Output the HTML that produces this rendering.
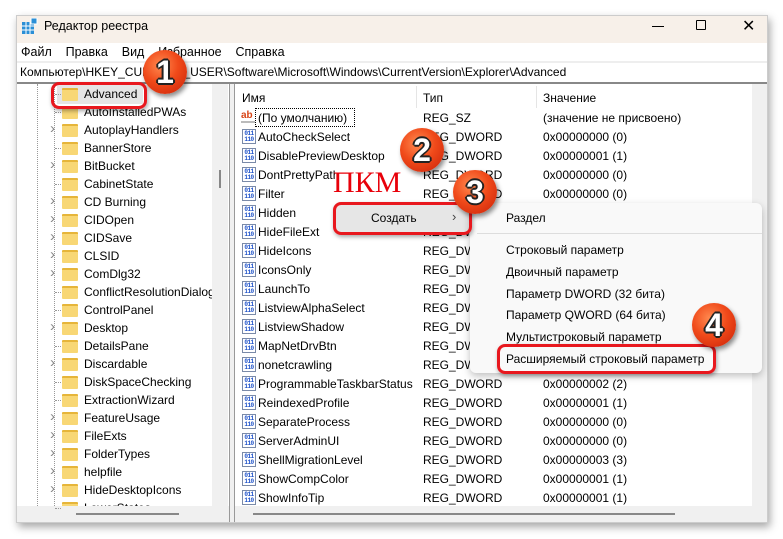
<!DOCTYPE html>
<html><head><meta charset="utf-8"><style>
*{margin:0;padding:0;box-sizing:border-box}
body{width:783px;height:539px;background:#fff;position:relative;overflow:hidden;font-family:"Segoe UI","Liberation Sans","DejaVu Sans",sans-serif;font-size:12px;color:#000}
.a{position:absolute;white-space:nowrap}
.win{position:absolute;left:16px;top:15px;width:752px;height:508px;background:#fff;box-shadow:2px 4px 8px rgba(0,0,0,.35);border:1px solid #ccc}
.title{position:absolute;left:0;top:0;width:100%;height:27px;background:#f7f0e9}
.fold{position:absolute;width:16px;height:13px;background:#f8d775;border-radius:1px;border-top:2px solid #e6b53a}
.reg{position:absolute;width:14px;height:15px;border:1px solid #7a8aa8;background:#fff;font:bold 6px/6px "Liberation Mono",monospace;color:#1a4fc8;text-align:center;padding-top:1px;letter-spacing:-.5px}
.circ{position:absolute;width:44px;height:44px;border-radius:50%;background:radial-gradient(circle at 40% 35%,#ff8a50 0%,#f04a1a 45%,#c82008 100%);box-shadow:2px 3px 5px rgba(0,0,0,.45);color:#fff;font:bold 32px/44px "Liberation Sans",sans-serif;text-align:center;text-shadow:-2px 0 #222,2px 0 #222,0 -2px #222,0 2px #222,-1px -1px #222,1px 1px #222,-1px 1px #222,1px -1px #222}
.rbox{position:absolute;border:3px solid #e8181e;border-radius:8px;box-shadow:1px 2px 4px rgba(0,0,0,.35)}
.chev{position:absolute;color:#888;font-size:15px}
</style></head><body>
<div class="win">
<div class="title"></div>
</div>
<svg class="a" style="left:22px;top:18px" width="16" height="16"><rect x="0" y="4" width="12" height="12" fill="#2b8fd6"/><path d="M0 8h12M0 12h12M4 4v12M8 4v12" stroke="#fff" stroke-width="1"/><rect x="9" y="0" width="6" height="6" fill="#2b8fd6" stroke="#fff"/></svg>
<div class="a" style="left:44px;top:19px;font-size:12.5px">Редактор реестра</div>
<div class="a" style="left:652px;top:26px;width:12px;height:1px;background:#000"></div>
<div class="a" style="left:696px;top:20px;width:10px;height:10px;border:1px solid #000;border-radius:1px"></div>
<div class="a" style="left:742px;top:16px;font-size:16px;font-weight:300">✕</div>
<div class="a" style="left:21px;top:45px;font-size:12.5px">Файл&nbsp;&nbsp;&nbsp;&nbsp;Правка&nbsp;&nbsp;&nbsp;&nbsp;Вид&nbsp;&nbsp;&nbsp;&nbsp;Избранное&nbsp;&nbsp;&nbsp;&nbsp;Справка</div>
<div class="a" style="left:17px;top:61px;width:750px;height:2px;background:#eee"></div>
<div class="a" style="left:20px;top:65px;font-size:12px">Компьютер\HKEY_CURRENT_USER\Software\Microsoft\Windows\CurrentVersion\Explorer\Advanced</div>
<div class="a" style="left:17px;top:82px;width:750px;height:2px;background:#888"></div>
<div class="a" style="left:212px;top:84px;width:16px;height:422px;background:#f0f0f0"></div>
<div class="a" style="left:219px;top:170px;width:2px;height:18px;background:#888"></div>
<div class="a" style="left:229px;top:84px;width:6px;height:438px;background:#f0f0f0;border-left:1px solid #999;border-right:1px solid #999"></div>
<div class="a" style="left:17px;top:506px;width:212px;height:16px;background:#f0f0f0"></div>
<div class="a" style="left:76px;top:513px;width:103px;height:2px;background:#888"></div>
<div class="a" style="left:235px;top:506px;width:532px;height:16px;background:#f0f0f0"></div>
<div class="a" style="left:253px;top:513px;width:422px;height:2px;background:#888"></div>
<div class="a" style="left:752px;top:84px;width:15px;height:422px;background:#f0f0f0"></div>
<div class="a" style="left:37px;top:84px;height:422px;border-left:1px dotted #999"></div>
<div class="a" style="left:54px;top:84px;height:422px;border-left:1px dotted #999"></div>
<div id="tree"></div>
<div class="a" style="left:242px;top:91px;font-size:12px">Имя</div>
<div class="a" style="left:416px;top:86px;width:1px;height:22px;background:#e5e5e5"></div>
<div class="a" style="left:423px;top:91px">Тип</div>
<div class="a" style="left:536px;top:86px;width:1px;height:22px;background:#e5e5e5"></div>
<div class="a" style="left:543px;top:91px">Значение</div>
<div id="rows"></div>
<div class="a" style="left:336px;top:205px;width:134px;height:27px;background:#e6e6e6;border-radius:4px"></div>
<div class="a" style="left:371px;top:211px;font-size:12px">Создать</div>
<div class="a" style="left:452px;top:209px;font-size:13px;color:#444">›</div>
<div class="a" style="left:470px;top:203px;width:292px;height:170px;background:#f9f9f9;border-radius:6px;box-shadow:0 3px 8px rgba(0,0,0,.25)"></div>
<div class="a" style="left:477px;top:233px;width:285px;height:1px;background:#ddd"></div>
<div class="a" style="left:506px;top:211px">Раздел</div>
<div class="a" style="left:506px;top:243px">Строковый параметр</div>
<div class="a" style="left:506px;top:265px">Двоичный параметр</div>
<div class="a" style="left:506px;top:287px">Параметр DWORD (32 бита)</div>
<div class="a" style="left:506px;top:308px">Параметр QWORD (64 бита)</div>
<div class="a" style="left:506px;top:330px">Мультистроковый параметр</div>
<div class="a" style="left:506px;top:352px">Расширяемый строковый параметр</div>
<div class="rbox" style="left:51px;top:82px;width:96px;height:27px"></div>
<div class="rbox" style="left:333px;top:202px;width:139px;height:33px"></div>
<div class="rbox" style="left:497px;top:344px;width:219px;height:30px"></div>
<div class="a" style="left:333px;top:166px;font:30px 'Liberation Serif',serif;color:#e8000a">ПКМ</div>
<div class="circ" style="left:143px;top:50px">1</div>
<div class="circ" style="left:400px;top:128px">2</div>
<div class="circ" style="left:453px;top:170px">3</div>
<div class="circ" style="left:692px;top:303px">4</div>
<script>
var t=["Advanced","AutoInstalledPWAs","AutoplayHandlers","BannerStore","BitBucket","CabinetState","CD Burning","CIDOpen","CIDSave","CLSID","ComDlg32","ConflictResolutionDialog","ControlPanel","Desktop","DetailsPane","Discardable","DiskSpaceChecking","ExtractionWizard","FeatureUsage","FileExts","FolderTypes","helpfile","HideDesktopIcons","LowerStates"];
var ch=[0,0,1,0,1,0,1,1,1,1,1,0,0,1,0,1,0,0,1,1,1,1,1,0];
var h="";
t.forEach(function(n,i){var y=94+i*18;if(y>510)return;
if(i==0)h+='<div class="a" style="left:57px;top:'+(y-9)+'px;width:86px;height:19px;background:#e5e5e5"></div>';
if(ch[i])h+='<div class="chev" style="left:50px;top:'+(y-10)+'px">›</div>';else h+='<div class="a" style="left:55px;top:'+y+'px;width:6px;border-top:1px dotted #999"></div>';
h+='<div style="position:absolute;left:0;top:84px;width:212px;height:422px;overflow:hidden"><div class="fold" style="left:62px;top:'+(y-6-84)+'px"></div><div class="a" style="left:84px;top:'+(y-7-84)+'px">'+n+'</div></div>';});
document.getElementById("tree").outerHTML=h;
var r=[["(По умолчанию)","REG_SZ","(значение не присвоено)"],["AutoCheckSelect","REG_DWORD","0x00000000 (0)"],["DisablePreviewDesktop","REG_DWORD","0x00000001 (1)"],["DontPrettyPath","REG_DWORD","0x00000000 (0)"],["Filter","REG_DWORD","0x00000000 (0)"],["Hidden","REG_DWORD",""],["HideFileExt","REG_DWORD",""],["HideIcons","REG_DWORD",""],["IconsOnly","REG_DWORD",""],["LaunchTo","REG_DWORD",""],["ListviewAlphaSelect","REG_DWORD",""],["ListviewShadow","REG_DWORD",""],["MapNetDrvBtn","REG_DWORD",""],["nonetcrawling","REG_DWORD",""],["ProgrammableTaskbarStatus","REG_DWORD","0x00000002 (2)"],["ReindexedProfile","REG_DWORD","0x00000001 (1)"],["SeparateProcess","REG_DWORD","0x00000000 (0)"],["ServerAdminUI","REG_DWORD","0x00000000 (0)"],["ShellMigrationLevel","REG_DWORD","0x00000003 (3)"],["ShowCompColor","REG_DWORD","0x00000001 (1)"],["ShowInfoTip","REG_DWORD","0x00000001 (1)"]];
h="";
r.forEach(function(x,i){var y=118+i*19;
if(i==0)h+='<div class="a" style="left:241px;top:'+(y-8)+'px;width:14px;height:13px;font:bold 10px/11px \'Liberation Sans\',sans-serif;color:#d84315;border-bottom:2px solid #bbb">ab</div><div class="a" style="left:255px;top:'+(y-10)+'px;width:100px;height:19px;border:1px dotted #000"></div>';
else h+='<div class="reg" style="left:242px;top:'+(y-8)+'px">011<br>110</div>';
h+='<div class="a" style="left:258px;top:'+(y-7)+'px">'+x[0]+'</div><div class="a" style="left:423px;top:'+(y-7)+'px">'+x[1]+'</div><div class="a" style="left:543px;top:'+(y-7)+'px">'+x[2]+'</div>';});
document.getElementById("rows").outerHTML=h;
</script>
</body></html>
